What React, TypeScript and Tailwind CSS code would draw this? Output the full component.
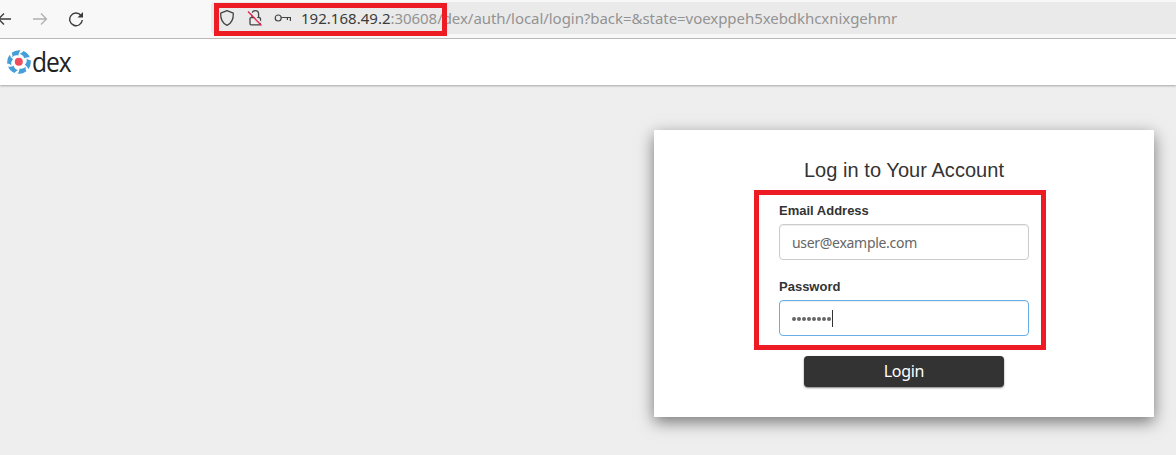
import React from "react";

const blades = [0, 60, 120, 180, 240, 300];
const dots = [0, 1, 2, 3, 4, 5, 6, 7];

function DexMark() {
  return (
    <svg className="h-6 w-6 shrink-0" viewBox="-12 -12 24 24">
      {blades.map((angle) => (
        <path
          key={angle}
          d="M-7.4 -9.2 A11.8 11.8 0 0 1 1.6 -11.7 C0.3 -10.2 -0.4 -8.6 -0.6 -6.4 C-3 -7.2 -5.2 -6.4 -7 -4.6 C-6.4 -6.3 -6.5 -7.8 -7.4 -9.2 Z"
          transform={`rotate(${angle})`}
          fill="#449fd8"
        />
      ))}
      <circle cx="-0.2" cy="-0.3" r="4" fill="#f04d5c" />
    </svg>
  );
}

function Toolbar() {
  return (
    <div className="flex h-[39px] border-b border-[#bcbcbc] bg-[#f8f8f8] pt-[2px]">
      <div className="flex w-[211px] shrink-0 items-start pt-[9px]">
        <svg className="h-4 w-[90px]" viewBox="0 0 90 16" fill="none" strokeWidth="1.3">
          <path d="M11 8H-1M4 2.5L-1.5 8L4 13.5" stroke="#3b3b3b" />
          <path d="M33 8H46M41 2.5L46.5 8L41 13.5" stroke="#b0b0b0" />
          <path d="M81 4.5A6.3 6.3 0 1 0 82.3 9" stroke="#3b3b3b" strokeWidth="1.4" />
          <path d="M83 1V6.5H77.5Z" fill="#3b3b3b" />
        </svg>
      </div>
      <div className="relative flex h-8 flex-1 items-center rounded-l bg-[#eaeaea] pl-2">
        <svg className="h-[18px] w-[76px] shrink-0" viewBox="0 0 76 18" fill="none" stroke="#444" strokeWidth="1.3">
          <path d="M8 1.6L14.3 4.2C14.6 10 12.5 14.2 8 16.4C3.5 14.2 1.4 10 1.7 4.2Z" strokeLinejoin="round" />
          <rect x="31" y="8.6" width="10.5" height="7.2" rx="1" />
          <path d="M33 8.4V4.9a3.3 3.3 0 0 1 6.6 0V8.4" />
          <path d="M30.5 2L44 15.5" stroke="#eaeaea" strokeWidth="1.6" />
          <path d="M29 2.5L42.5 16.5" stroke="#e22850" strokeWidth="1.4" />
          <circle cx="59.2" cy="9" r="3" strokeWidth="1.2" />
          <path d="M62.2 8.5H72M71.4 8.5V12M68.4 8.5V11" strokeWidth="1.2" />
        </svg>
        <div className="ml-[6px] whitespace-nowrap font-['Noto_Sans',sans-serif] text-[15px] leading-[20px] text-[#939393]">
          <span className="tracking-[0.02px] text-[#3c3c3c]">192.168.49.2</span>
          <span className="tracking-[-0.05px]">:30608/dex/auth/local/login?back=&amp;state=voexppeh5xebdkhcxnixgehmr</span>
        </div>
        <div className="absolute left-[3px] top-px h-[33px] w-[233px] border-5 border-[#ed1c24]" />
      </div>
    </div>
  );
}

function Field({ label, active, children }: { label: string; active?: boolean; children: React.ReactNode }) {
  return (
    <div className="h-[76px]">
      <div className="h-[22px] font-['Liberation_Sans',Arial,sans-serif] text-[13px] font-bold leading-[17px] text-[#333]">
        {label}
      </div>
      <div
        className={`flex h-9 w-[250px] items-center rounded border bg-white px-3 font-['Noto_Sans',sans-serif] text-[14px] tracking-[-0.3px] text-[#666] shadow-[inset_0_1px_1px_rgba(0,0,0,0.075)] ${
          active ? "border-[#66afe9]" : "border-[#ccc]"
        }`}
      >
        {children}
      </div>
    </div>
  );
}

export default function App() {
  return (
    <div className="flex h-[455px] w-[1176px] flex-col overflow-hidden bg-[#eee]">
      <Toolbar />
      <header className="flex h-[46px] shrink-0 items-center bg-white pl-[7px] shadow-[0_1px_2px_rgba(0,0,0,0.3)]">
        <DexMark />
        <span className="mb-[2px] ml-px origin-left scale-x-[0.91] font-['Open_Sans',sans-serif] text-[27px] leading-none tracking-[-1.2px] text-[#222]">
          dex
        </span>
      </header>
      <main className="flex justify-end pr-[22px] pt-[45px]">
        <div className="relative h-[287px] w-[500px] bg-white pt-[28px] shadow-[0_5px_15px_rgba(0,0,0,0.5)]">
          <h1 className="text-center font-['Liberation_Sans',Arial,sans-serif] text-[20px] leading-6 tracking-[0.05px] text-[#333]">
            Log in to Your Account
          </h1>
          <div className="ml-[125px] mt-5">
            <Field label="Email Address">
              <span>user@example.com</span>
            </Field>
            <Field label="Password" active>
              <span className="mt-[2px] flex gap-px">
                {dots.map((k) => (
                  <span key={k} className="h-1 w-1 rounded-full bg-[#666]" />
                ))}
              </span>
              <span className="ml-px h-[17px] w-px bg-[#333]" />
            </Field>
          </div>
          <button className="mx-auto mt-[2px] block h-[31px] w-[200px] rounded bg-[#333] font-['Noto_Sans',sans-serif] text-[16px] leading-[29px] tracking-[-0.3px] text-white shadow-[0_1px_2px_rgba(0,0,0,0.5)]">
            Login
          </button>
          <div className="pointer-events-none absolute left-[100px] top-[60px] h-40 w-[292px] border-5 border-[#ed1c24]" />
        </div>
      </main>
    </div>
  );
}
